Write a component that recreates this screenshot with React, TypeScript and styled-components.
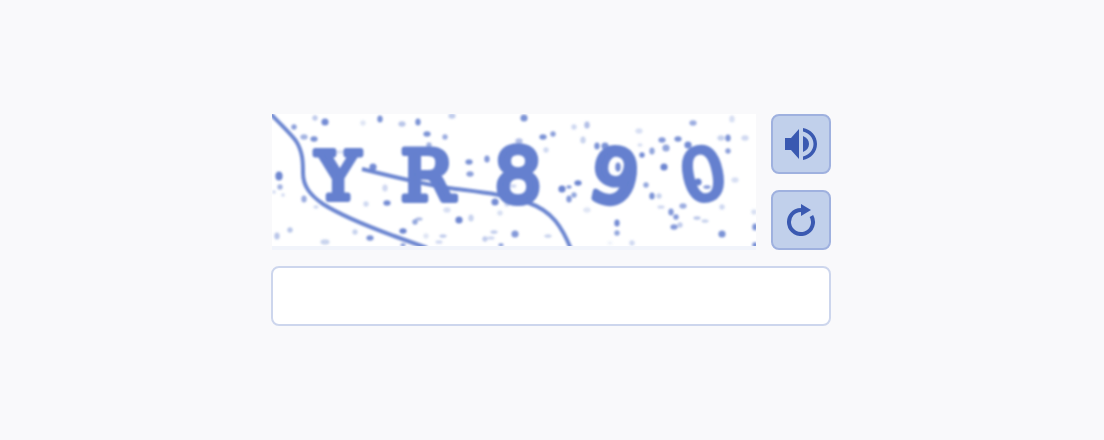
import React, { useState } from "react";
import styled, { createGlobalStyle } from "styled-components";

const colors = {
  page: "#f9f9fb",
  ink: "#6580cf",
  icon: "#3a59b1",
  button: "#c1d0eb",
  buttonBorder: "#9fb1df",
  fieldBorder: "#cdd6ed",
  strip: "#f1f4fb",
};

const GlobalStyle = createGlobalStyle`
  * { box-sizing: border-box; }
  body { margin: 0; background: ${colors.page}; font-family: "Liberation Sans", sans-serif; }
`;

const Page = styled.main`
  min-height: 100vh;
  display: flex;
  align-items: center;
  justify-content: center;
  padding: 16px 18px 16px 16px;
`;

const Form = styled.form`
  width: 100%;
  max-width: 560px;
  display: flex;
  flex-direction: column;
  gap: 16px;
`;

const ChallengeRow = styled.div`
  display: flex;
  gap: 15px;
  padding-left: 1px;
`;

const Challenge = styled.div`
  flex: 1;
  min-width: 0;
  background: #fff;
  border-bottom: 4px solid ${colors.strip};
`;

const Drawing = styled.svg`
  display: block;
  width: 100%;
  height: auto;
`;

const Actions = styled.div`
  display: flex;
  flex-direction: column;
  gap: 16px;
`;

const IconButton = styled.button`
  width: 60px;
  height: 60px;
  padding: 0;
  display: flex;
  align-items: center;
  justify-content: center;
  color: ${colors.icon};
  background: ${colors.button};
  border: 2px solid ${colors.buttonBorder};
  border-radius: 8px;
  cursor: pointer;
`;

const Icon = styled.svg`
  display: block;
  width: 32px;
  height: 32px;
`;

const Answer = styled.input`
  width: 100%;
  height: 60px;
  padding: 0 16px;
  font: 24px "Liberation Sans", sans-serif;
  color: ${colors.icon};
  background: #fff;
  border: 2px solid ${colors.fieldBorder};
  border-radius: 8px;
`;

const Glyph = styled.text<{ $face: string; $size: number; $outline: number }>`
  font-family: ${(p) => p.$face};
  font-size: ${(p) => p.$size}px;
  text-anchor: middle;
  fill: ${colors.ink};
  stroke: ${colors.ink};
  stroke-width: ${(p) => p.$outline}px;
  stroke-linejoin: round;
`;

const serif = '"DejaVu Serif", serif';
const sans = '"DejaVu Sans", sans-serif';

// Ink specks: x, y, horizontal radius, vertical radius, opacity
const specks: number[][] = [
  [43,4,3,3,.4],[53,8,4,4,.9],[22,13,3,3,.75],[32,23,4,3,.6],[42,25,4,3,.85],[91,9,3,3,.2],[108,5,3,4,.85],
  [7,62,4,5,.95],[8,73,3,3,.6],[2,78,2,2,.3],[11,81,2,2,.3],[32,85,3,4,.65],[44,93,3,2,.3],[94,90,3,3,.3],
  [18,116,3,3,.45],[5,122,3,4,.45],[53,128,5,3,.35],[83,118,3,3,.35],[98,124,4,3,.85],[113,74,3,4,.3],
  [68,38,5,2,.2],[101,53,4,4,.9],[130,10,4,3,.45],[146,8,3,4,.85],[180,2,4,3,.4],[155,20,4,3,.85],
  [173,23,3,3,.65],[157,31,3,3,.6],[197,48,4,3,.85],[198,60,4,3,.75],[215,45,3,4,.8],[115,89,4,3,.9],
  [223,88,4,4,.9],[175,96,4,3,.25],[187,106,4,4,.95],[199,104,3,4,.35],[228,99,3,3,.25],[147,105,4,2,.5],
  [143,108,3,3,.7],[131,117,4,3,.95],[154,122,3,3,.2],[171,122,4,2,.4],[167,128,4,2,.3],[222,118,4,2,.4],
  [213,125,3,3,.4],[219,124,4,2,.3],[229,131,3,2,.8],[131,131,3,2,.8],[243,120,4,4,.8],[252,4,4,4,.85],
  [271,23,4,3,.85],[281,20,3,3,.75],[302,13,3,3,.3],[315,11,3,4,.5],[311,26,3,4,.35],[274,36,3,3,.3],
  [247,27,4,3,.5],[325,32,3,4,.85],[333,32,4,4,.85],[290,75,4,4,.95],[297,73,3,2,.8],[306,69,4,3,.95],
  [302,81,3,3,.7],[297,85,3,4,.8],[315,96,4,3,.2],[345,109,3,4,.9],[345,119,3,3,.7],[276,122,4,2,.35],
  [338,129,3,2,.1],[360,129,3,3,.3],[346,53,3,5,.9],[235,90,3,3,.3],[241,72,4,2,.3],[421,9,4,3,.65],
  [460,5,3,4,.25],[367,17,4,3,.25],[368,31,3,2,.25],[390,26,4,3,.8],[406,25,4,3,.85],[394,34,4,4,.7],
  [380,37,3,4,.7],[370,41,3,3,.9],[392,53,4,4,.95],[456,24,3,4,.85],[449,24,4,3,.35],[473,24,4,3,.3],
  [456,37,3,3,.75],[416,31,4,4,.9],[426,68,4,4,1],[435,73,4,2,.8],[463,66,4,3,.25],[380,82,3,4,.85],
  [387,82,3,3,.35],[389,93,4,2,.3],[411,92,4,3,.65],[399,98,3,4,.8],[404,103,3,3,.8],[402,113,4,3,.8],
  [408,111,3,3,.4],[425,104,4,2,.45],[433,107,4,2,.35],[450,93,3,3,.3],[450,120,4,4,.85],[482,98,3,3,.25],
  [483,113,3,4,.85],[483,131,3,3,.9],[374,71,3,3,.7],
];

export default function App() {
  const [answer, setAnswer] = useState("");

  return (
    <>
      <GlobalStyle />
      <Page>
        <Form onSubmit={(e) => e.preventDefault()}>
          <ChallengeRow>
            <Challenge>
              <Drawing viewBox="0 0 484 132">
                <defs>
                  <filter id="soft" x="-8" y="-8" width="500" height="148" filterUnits="userSpaceOnUse">
                    <feGaussianBlur stdDeviation="1.200" />
                  </filter>
                </defs>
                <g filter="url(#soft)">
                  {specks.map(([x, y, rx, ry, o], i) => (
                    <ellipse key={i} cx={x} cy={y} rx={rx * 0.9} ry={ry * 0.9} fill={colors.ink} opacity={o} />
                  ))}
                  <g fill="none" stroke={colors.ink} strokeWidth="4" opacity="0.95">
                    <path d="M-2-1C9 11 18 19 24 27C31 38 31 49 31 59C31 72 38 81 51 90C73 104 103 115 122 122L155 134" />
                    <path d="M90 55C122 63 158 72 184 75C208 78 237 81 257 89C280 97 290 113 299 135" />
                  </g>
                  <Glyph x={66} y={85} $face={serif} $size={66} $outline={6}>Y</Glyph>
                  <Glyph x={155} y={86} $face={serif} $size={70} $outline={6}>R</Glyph>
                  <Glyph x={246} y={88} $face={sans} $size={74} $outline={6}>8</Glyph>
                  <Glyph x={343} y={89} $face={sans} $size={74} $outline={6} transform="rotate(12 343 62)">9</Glyph>
                  <Glyph x={431} y={86} $face={sans} $size={72} $outline={4} transform="rotate(-12 431 60)">0</Glyph>
                </g>
              </Drawing>
            </Challenge>
            <Actions>
              <IconButton type="button" aria-label="Play audio">
                <Icon viewBox="0 0 32 32" fill="currentColor" aria-hidden="true">
                  <path d="M0 10H6L14 1V31L6 22H0Z" />
                  <path d="M18 8C22 9.500 24 12.500 24 16S22 22.500 18 24Z" />
                  <path d="M18 0C26 1.500 32 8 32 16S26 30.500 18 32V28.500C24 27 28.500 22 28.500 16S24 5 18 3.500Z" />
                </Icon>
              </IconButton>
              <IconButton type="button" aria-label="New code">
                <Icon viewBox="0 0 32 32" aria-hidden="true">
                  <path d="M16 6A12 12 0 1 0 26.400 12" fill="none" stroke="currentColor" strokeWidth="4" />
                  <path d="M16 0L26 6L16 12Z" fill="currentColor" />
                </Icon>
              </IconButton>
            </Actions>
          </ChallengeRow>
          <Answer
            type="text"
            aria-label="Code"
            autoComplete="off"
            value={answer}
            onChange={(e) => setAnswer(e.target.value)}
          />
        </Form>
      </Page>
    </>
  );
}
